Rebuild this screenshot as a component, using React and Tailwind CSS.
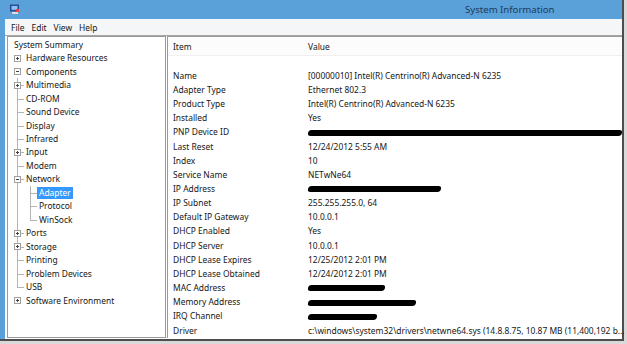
import React from "react";

const tree = [
  { t: "System Summary", l: 0 },
  { t: "Hardware Resources", l: 1, box: "+" },
  { t: "Components", l: 1, box: "-" },
  { t: "Multimedia", l: 2, box: "+" },
  { t: "CD-ROM", l: 2 },
  { t: "Sound Device", l: 2 },
  { t: "Display", l: 2 },
  { t: "Infrared", l: 2 },
  { t: "Input", l: 2, box: "+" },
  { t: "Modem", l: 2 },
  { t: "Network", l: 2, box: "-" },
  { t: "Adapter", l: 3, sel: true },
  { t: "Protocol", l: 3 },
  { t: "WinSock", l: 3, last: true },
  { t: "Ports", l: 2, box: "+" },
  { t: "Storage", l: 2, box: "+" },
  { t: "Printing", l: 2 },
  { t: "Problem Devices", l: 2 },
  { t: "USB", l: 2, last: true },
  { t: "Software Environment", l: 1, box: "+" },
];

// redacted values are drawn as black marker strokes
const items = [
  ["Name", "[00000010] Intel(R) Centrino(R) Advanced-N 6235"],
  ["Adapter Type", "Ethernet 802.3"],
  ["Product Type", "Intel(R) Centrino(R) Advanced-N 6235"],
  ["Installed", "Yes"],
  ["PNP Device ID", { w: 314 }],
  ["Last Reset", "12/24/2012 5:55 AM"],
  ["Index", "10"],
  ["Service Name", "NETwNe64"],
  ["IP Address", { w: 133 }],
  ["IP Subnet", "255.255.255.0, 64"],
  ["Default IP Gateway", "10.0.0.1"],
  ["DHCP Enabled", "Yes"],
  ["DHCP Server", "10.0.0.1"],
  ["DHCP Lease Expires", "12/25/2012 2:01 PM"],
  ["DHCP Lease Obtained", "12/24/2012 2:01 PM"],
  ["MAC Address", { w: 77 }],
  ["Memory Address", { w: 108 }],
  ["IRQ Channel", { w: 69 }],
  ["Driver", "c:\\windows\\system32\\drivers\\netwne64.sys (14.8.8.75, 10.87 MB (11,400,192 b..."],
];

// plus/minus expander box
const Box = ({ sign }) => (
  <span className="relative z-10 flex h-[7px] w-[7px] items-center justify-center border border-[#a0a0a0] bg-white">
    <span className="absolute h-px w-[3px] bg-[#444]" />
    {sign === "+" && <span className="absolute h-[3px] w-px bg-[#444]" />}
  </span>
);

const TreeRow = ({ row }) => {
  const cols = [];
  // ancestor column for level-3 rows: Components' children continue below
  if (row.l === 3) {
    cols.push(
      <span key="anc" className="relative h-full w-[13px] shrink-0">
        <span className="absolute left-[6px] top-0 h-full w-px bg-[#b4b4b4]" />
      </span>
    );
  }
  if (row.l >= 1) {
    cols.push(
      <span key="own" className="relative flex h-full w-[13px] shrink-0 items-center justify-center">
        {row.l >= 2 && (
          <>
            <span className={`absolute left-[6px] top-0 w-px bg-[#b4b4b4] ${row.last ? "h-1/2" : "h-full"}`} />
            <span className="absolute left-[6px] top-1/2 h-px w-[7px] bg-[#b4b4b4]" />
          </>
        )}
        {row.box && <Box sign={row.box} />}
      </span>
    );
  }
  return (
    <div className={`flex h-[13.47px] items-center ${row.l === 0 ? "pl-[4px]" : "pl-[3px]"}`}>
      {cols}
      <span
        className={`whitespace-nowrap leading-[12px] ${
          row.sel ? "bg-[#3399ff] px-[2px] text-white" : "ml-[2px]"
        }`}
      >
        {row.t}
      </span>
    </div>
  );
};

const Value = ({ v }) => {
  if (typeof v === "string") return <span className="whitespace-nowrap">{v}</span>;
  return (
    <span className="flex h-[13px] items-center" style={{ width: v.w }}>
      <span className="h-[6px] w-full -skew-x-12 rounded-full bg-black" />
    </span>
  );
};

const App = () => {
  return (
    <div
      className="h-[344px] w-[627px] overflow-hidden bg-[#d9d9d9] text-[8.45px] text-[#161616]"
      style={{ fontFamily: '"Noto Sans", "Open Sans", sans-serif' }}
    >
      <div className="flex h-[341px] w-[624px] flex-col border-b-2 border-r-2 border-[#4d4d4d] bg-white">
        {/* Title bar */}
        <div className="flex h-[19px] shrink-0 items-center bg-[#5aa0d9]">
          <svg width="10" height="11" viewBox="0 0 10 11" className="ml-[10px]">
            <rect x="0.5" y="1" width="8" height="6" fill="#2f5fb5" stroke="#1b3c86" strokeWidth="0.8" />
            <rect x="1.6" y="2" width="5.8" height="3.8" fill="#8fc2f2" />
            <rect x="2" y="8" width="6" height="2" fill="#dcdcdc" />
            <rect x="6" y="5" width="3" height="3" fill="#e04646" />
          </svg>
          <span className="ml-[445px] pt-[1px] text-[9.6px] text-[#1d3b5e]">System Information</span>
        </div>
        {/* Body */}
        <div className="flex min-h-0 flex-1 flex-col border-l-[5px] border-[#5aa0d9]">
          {/* Menu bar */}
          <div className="flex h-[17px] shrink-0 items-center gap-[7px] border-b border-[#a7a7a7] bg-[#f5f6f7] pl-[6px] pt-[3px]">
            <span>File</span>
            <span>Edit</span>
            <span>View</span>
            <span>Help</span>
          </div>
          <div className="flex min-h-0 flex-1 pb-[1px] pl-[2px]">
            {/* Tree pane */}
            <div className="w-[159px] shrink-0 border border-[#9a9a9a] pt-[1px]">
              {tree.map((r) => (
                <TreeRow key={r.t} row={r} />
              ))}
            </div>
            {/* List pane */}
            <div className="ml-[1px] min-w-0 flex-1 border-l border-t border-[#9a9a9a]">
              <div className="flex h-[19px] items-center border-b border-[#f0f0f0] bg-[#fcfcfc] pt-[3px]">
                <span className="w-[140px] pl-[5px]">Item</span>
                <span>Value</span>
              </div>
              <div className="pt-[13px]">
                {items.map(([k, v]) => (
                  <div key={k} className="flex h-[14.17px] items-center">
                    <span className="w-[140px] shrink-0 whitespace-nowrap pl-[5px]">{k}</span>
                    <Value v={v} />
                  </div>
                ))}
              </div>
            </div>
          </div>
        </div>
      </div>
    </div>
  );
};

export default App;
